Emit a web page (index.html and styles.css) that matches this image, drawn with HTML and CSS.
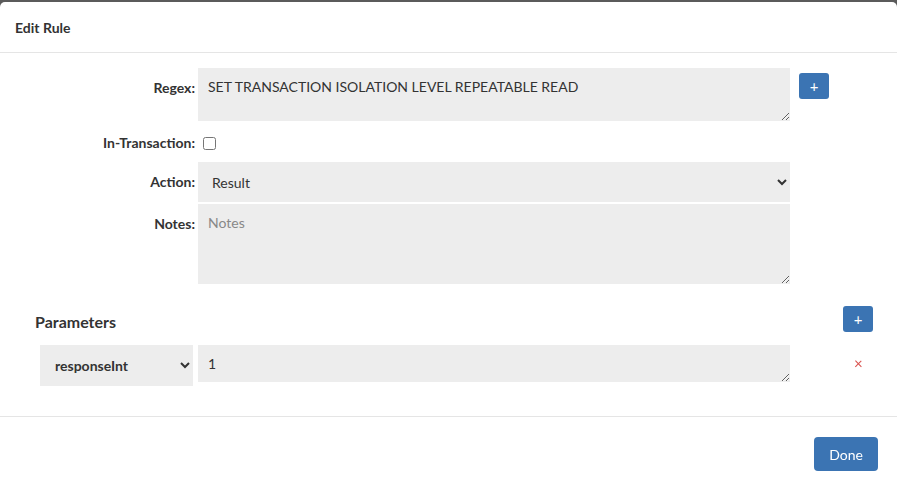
FILE: index.html
```html
<!DOCTYPE html>
<html lang="en">
<head>
    <meta charset="UTF-8">
    <title>Edit Rule</title>
    <link rel="stylesheet" href="styles.css">
</head>
<body>
    <div class="modal">
        <div class="modal-header">
            <h4>Edit Rule</h4>
        </div>
        <div class="modal-body">
            <div class="form-row">
                <label class="form-label">Regex:</label>
                <textarea class="field regex">SET TRANSACTION ISOLATION LEVEL REPEATABLE READ</textarea>
                <button class="btn btn-small">+</button>
            </div>
            <div class="form-row check-row">
                <label class="form-label">In-Transaction:</label>
                <input type="checkbox" class="check">
            </div>
            <div class="form-row">
                <label class="form-label">Action:</label>
                <select class="field action">
                    <option>Result</option>
                </select>
            </div>
            <div class="form-row">
                <label class="form-label">Notes:</label>
                <textarea class="field notes" placeholder="Notes"></textarea>
            </div>

            <div class="params-head">
                <h5>Parameters</h5>
                <button class="btn btn-small">+</button>
            </div>
            <div class="param-row">
                <select class="field param-name">
                    <option>responseInt</option>
                </select>
                <textarea class="field param-value">1</textarea>
                <span class="remove">×</span>
            </div>
        </div>
        <div class="modal-footer">
            <button class="btn btn-done">Done</button>
        </div>
    </div>
</body>
</html>
```

FILE: styles.css
```css
* {
    box-sizing: border-box;
    font-family: Lato, "Open Sans", sans-serif;
}

body {
    margin: 0;
    background: #5b5b5b;
    height: 490px;
    overflow: hidden;
}

.modal {
    margin-top: 2px;
    background: white;
    border-radius: 5px;
    height: 500px;
    color: #333;
}

.modal-header {
    height: 51px;
    padding: 0 15px;
    display: flex;
    align-items: center;
    border-bottom: 1px solid #e5e5e5;
}

.modal-header h4 {
    margin: 0;
    font-size: 14px;
    font-weight: bold;
}

.modal-body {
    padding: 15px 0 0;
    height: 364px;
    border-bottom: 1px solid #e5e5e5;
}

.form-row {
    display: flex;
    align-items: flex-start;
    margin-bottom: 2px;
}

.form-label {
    width: 198px;
    padding: 11px 3px 0 0;
    text-align: right;
    font-size: 14px;
    font-weight: bold;
    line-height: 18px;
}

.field {
    background: #ededed;
    border: none;
    border-radius: 0;
    color: #333;
    font-size: 14px;
    line-height: 18px;
    outline: none;
}

textarea.field {
    padding: 10px;
    resize: vertical;
}

.regex {
    width: 592px;
    height: 53px;
}

.btn {
    background: #3b74b3;
    color: white;
    border: none;
    border-radius: 3px;
    cursor: pointer;
}

.btn-small {
    width: 30px;
    height: 26px;
    font-size: 15px;
    line-height: 1;
    padding: 0;
}

.form-row .btn-small {
    margin: 5px 0 0 9px;
}

.check-row {
    margin: 11px 0 8px;
    height: 22px;
    align-items: center;
}

.check-row .form-label {
    padding-top: 0;
}

.check {
    margin: 0 0 0 5px;
    width: 13px;
    height: 13px;
}

.action {
    width: 592px;
    height: 40px;
    padding: 0 10px;
}

.notes {
    width: 592px;
    height: 80px;
}

.notes::placeholder {
    color: #888;
}

.params-head {
    display: flex;
    justify-content: space-between;
    align-items: center;
    margin: 22px 24px 0 35px;
    height: 26px;
}

.params-head h5 {
    margin: 4px 0 0;
    font-size: 16px;
    font-weight: bold;
}

.param-row {
    display: flex;
    align-items: flex-start;
    margin: 13px 0 0 40px;
}

.param-name {
    width: 153px;
    height: 41px;
    padding: 0 8px 0 11px;
    font-weight: bold;
}

.param-value {
    width: 592px;
    height: 37px;
    margin-left: 5px;
}

.remove {
    margin: 9px 0 0 64px;
    color: #d9534f;
    font-size: 15px;
}

.modal-footer {
    display: flex;
    justify-content: flex-end;
    padding: 20px 19px;
}

.btn-done {
    height: 34px;
    padding: 0 15px;
    font-size: 14px;
    border-radius: 4px;
}
```
